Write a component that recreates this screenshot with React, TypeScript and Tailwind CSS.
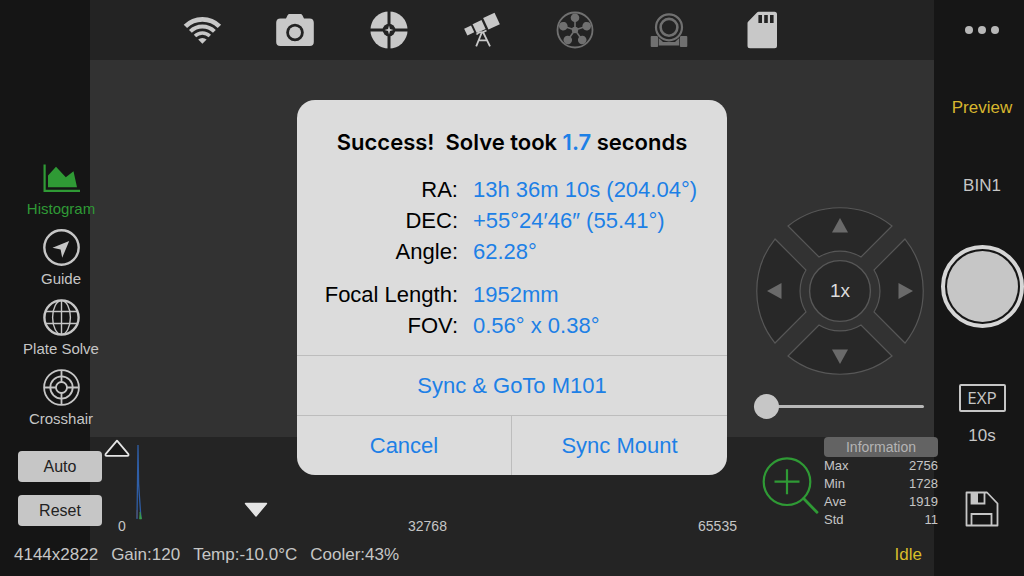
import React, { useState } from 'react';

interface SolveRow {
    label: string;
    value: string;
    spaced?: boolean;
}

interface ToolItem {
    label: string;
    icon: React.ElementType;
    active?: boolean;
}

const SOLVE_ROWS: SolveRow[] = [
    { label: 'RA:', value: '13h 36m 10s (204.04°)' },
    { label: 'DEC:', value: '+55°24′46″ (55.41°)' },
    { label: 'Angle:', value: '62.28°' },
    { label: 'Focal Length:', value: '1952mm', spaced: true },
    { label: 'FOV:', value: '0.56° x 0.38°' },
];

const STATS = [
    { name: 'Max', value: 2756 },
    { name: 'Min', value: 1728 },
    { name: 'Ave', value: 1919 },
    { name: 'Std', value: 11 },
];

const STATUS = ['4144x2822', 'Gain:120', 'Temp:-10.0°C', 'Cooler:43%'];

/* ---------- Top bar icons ---------- */

const WifiIcon = () => (
    <svg viewBox="0 0 40 40" className="h-10 w-10" fill="none" stroke="currentColor">
        <path d="M3.4 16.4A24 24 0 0 1 37.4 16.4" strokeWidth="4.8" />
        <path d="M8.4 21.4A17 17 0 0 1 32.4 21.4" strokeWidth="4" />
        <path d="M13 26A10.5 10.5 0 0 1 27.8 26" strokeWidth="3.4" />
        <path d="M20.4 33.8L16.2 29.6A6 6 0 0 1 24.6 29.6Z" fill="currentColor" stroke="none" />
    </svg>
);

const CameraIcon = () => (
    <svg viewBox="0 0 40 40" className="h-10 w-10" fill="currentColor">
        <path
            fillRule="evenodd"
            d="M5.5 8.5H11L12.6 5.2Q13.2 4 14.6 4H25.4Q26.8 4 27.4 5.2L29 8.5H34.5Q38.8 8.5 38.8 12.8V32Q38.8 36 34.8 36H5.2Q1.2 36 1.2 32V12.8Q1.2 8.5 5.5 8.5ZM20 13.7A8.8 8.8 0 1 0 20 31.3A8.8 8.8 0 1 0 20 13.7Z"
        />
        <circle cx="20" cy="22.5" r="6" />
    </svg>
);

const GuiderIcon = () => (
    <svg viewBox="0 0 40 40" className="h-10 w-10">
        <circle cx="20" cy="20" r="18.6" fill="currentColor" />
        <g stroke="#232323" strokeWidth="3">
            <path d="M20 0V40M0 20H40" />
        </g>
        <circle cx="20" cy="20" r="6.3" fill="#232323" />
        <path d="M20 15.5L21 19L24.5 20L21 21L20 24.5L19 21L15.5 20L19 19Z" fill="currentColor" />
    </svg>
);

const TelescopeIcon = () => (
    <svg viewBox="0 0 40 40" className="h-10 w-10" fill="currentColor">
        <rect x="3.4" y="16.7" width="7.6" height="7.6" transform="rotate(-25 7.2 20.5)" />
        <rect x="12.2" y="11.7" width="9.8" height="9.8" transform="rotate(-25 17.1 16.6)" />
        <rect x="23.2" y="4.8" width="12.6" height="12.6" transform="rotate(-25 29.5 11.1)" />
        <g fill="none" stroke="currentColor" strokeWidth="1.8">
            <path d="M14.5 24.5Q17 21.5 20.5 22.3L24.5 20.5" />
            <path d="M20 22L14.2 36.4M21 22L28 36.4M17 30.3H25" />
        </g>
    </svg>
);

const FilterWheelIcon = () => (
    <svg viewBox="0 0 40 40" className="h-10 w-10">
        <circle cx="20" cy="20" r="17.5" fill="none" stroke="currentColor" strokeWidth="1.8" />
        {[0, 72, 144, 216, 288].map((angle) => (
            <g key={angle} transform={`rotate(${angle} 20 20)`}>
                <path d="M20 20V8" stroke="currentColor" strokeWidth="1.6" />
                <circle cx="20" cy="7.7" r="4.3" fill="currentColor" />
            </g>
        ))}
        <circle cx="20" cy="20" r="3.2" fill="currentColor" />
    </svg>
);

const FocuserIcon = () => (
    <svg viewBox="0 0 40 40" className="h-10 w-10" fill="currentColor">
        <rect x="1.7" y="26" width="7.4" height="11" rx="1" />
        <rect x="30.9" y="26" width="7.4" height="11" rx="1" />
        <path d="M9.8 28Q12 30 14 32H26Q28 30 30.2 28V35.5H9.8Z" />
        <circle cx="20" cy="17.3" r="14.6" fill="#232323" />
        <g fill="none" stroke="currentColor" strokeWidth="2.2">
            <circle cx="20" cy="17.3" r="13" />
            <circle cx="20" cy="17.3" r="8.4" strokeWidth="2.6" />
        </g>
    </svg>
);

const SdCardIcon = () => (
    <svg viewBox="0 0 40 40" className="h-10 w-10">
        <path
            d="M16.5 1.8H32.5Q35 1.8 35 4.3V35.8Q35 38.3 32.5 38.3H8Q5.5 38.3 5.5 35.8V13.3Q5.5 12.3 6.3 11.5L15 2.5Q15.7 1.8 16.5 1.8Z"
            fill="currentColor"
        />
        <path d="M18.2 5V13M24 5V13M29.8 5V13" stroke="#232323" strokeWidth="3.6" />
    </svg>
);

/* ---------- Left tool icons ---------- */

const HistogramIcon = () => (
    <svg viewBox="0 0 37 37" className="h-[37px] w-[37px]" fill="currentColor">
        <path d="M.5 5.5H2.7V30.8H37V33H.5Z" />
        <path d="M5 16.5L13 7.7L22.8 18.3L30.5 12.3L34 28.3H5Z" />
    </svg>
);

const GuideIcon = () => (
    <svg viewBox="0 0 37 37" className="h-[37px] w-[37px]">
        <circle cx="18.5" cy="18.5" r="17.2" fill="none" stroke="currentColor" strokeWidth="2.4" />
        <path d="M26.2 12L19.2 28.7L17.6 20.4L9.5 18.7Z" fill="currentColor" />
    </svg>
);

const GlobeIcon = () => (
    <svg viewBox="0 0 37 37" className="h-[37px] w-[37px]" fill="none" stroke="currentColor" strokeWidth="1.4">
        <circle cx="18.5" cy="18.5" r="17.1" strokeWidth="2.4" />
        <ellipse cx="18.5" cy="18.5" rx="8.9" ry="17" />
        <path d="M18.5 1.5V35.5M2.5 12.5H34.5M2.5 24.5H34.5" />
    </svg>
);

const CrosshairIcon = () => (
    <svg viewBox="0 0 37 37" className="h-[37px] w-[37px]" fill="none" stroke="currentColor" strokeWidth="1.8">
        <circle cx="18.5" cy="18.5" r="17.4" />
        <circle cx="18.5" cy="18.5" r="11.2" />
        <circle cx="18.5" cy="18.5" r="5.5" />
        <path d="M18.5 1V13M18.5 24V36M1 18.5H13M24 18.5H36" />
    </svg>
);

const DEVICES = [
    { label: 'Connection', icon: WifiIcon, enabled: true },
    { label: 'Main camera', icon: CameraIcon, enabled: true },
    { label: 'Guide camera', icon: GuiderIcon, enabled: true },
    { label: 'Mount', icon: TelescopeIcon, enabled: true },
    { label: 'Filter wheel', icon: FilterWheelIcon, enabled: false },
    { label: 'Focuser', icon: FocuserIcon, enabled: false },
    { label: 'Storage', icon: SdCardIcon, enabled: true },
];

const TOOLS: ToolItem[] = [
    { label: 'Histogram', icon: HistogramIcon, active: true },
    { label: 'Guide', icon: GuideIcon },
    { label: 'Plate Solve', icon: GlobeIcon },
    { label: 'Crosshair', icon: CrosshairIcon },
];

const DirectionPad: React.FC = () => (
    <div className="relative h-[168px] w-[168px]">
        <svg viewBox="-84 -84 168 168" className="absolute inset-0 h-full w-full">
            {[0, 90, 180, 270].map((angle) => (
                <g key={angle} transform={`rotate(${angle})`}>
                    <path
                        d="M-52 -65A83.2 83.2 0 0 1 52 -65L21 -34A40 40 0 0 0 -21 -34Z"
                        fill="#282828"
                        stroke="#575757"
                        strokeWidth="1.2"
                    />
                    <path d="M0 -73L8 -58.5H-8Z" fill="#6a6a6a" />
                </g>
            ))}
            <circle r="30.4" fill="#282828" stroke="#575757" strokeWidth="1.4" />
        </svg>
        <div className="relative grid h-full grid-cols-3 grid-rows-3 text-[19px] text-[#dcdcdc]">
            <button className="col-start-2" aria-label="Slew north" />
            <button className="col-start-1 row-start-2" aria-label="Slew west" />
            <button className="col-start-2 row-start-2">1x</button>
            <button className="col-start-3 row-start-2" aria-label="Slew east" />
            <button className="col-start-2 row-start-3" aria-label="Slew south" />
        </div>
    </div>
);

const SolveDialog: React.FC = () => (
    <div className="absolute inset-0 z-30 flex items-center justify-center pb-0.5">
        <div
            role="dialog"
            aria-labelledby="solve-title"
            className="w-[430px] overflow-hidden rounded-[18px] bg-[#dcdcdc] text-[22px] text-black"
        >
            <h1
                id="solve-title"
                className="pt-7 text-center font-['Inter',sans-serif] text-[22px] leading-7 font-semibold whitespace-pre"
            >
                Success!{'  '}Solve took <span className="text-[#1d80e6]">1.7</span> seconds
            </h1>
            <dl className="mt-[18px] pb-3.5">
                {SOLVE_ROWS.map((row) => (
                    <div
                        key={row.label}
                        className={`grid grid-cols-[161px_1fr] gap-x-[15px] leading-[31px] ${row.spaced ? 'mt-3' : ''}`}
                    >
                        <dt className="text-right">{row.label}</dt>
                        <dd className="whitespace-nowrap text-[#1d80e6]">{row.value}</dd>
                    </div>
                ))}
            </dl>
            <div className="grid grid-cols-2 text-[#1d80e6]">
                <button className="col-span-2 h-[60px] border-t border-[#bdbdbd]">Sync &amp; GoTo M101</button>
                <button className="h-[60px] border-t border-r border-[#bdbdbd]">Cancel</button>
                <button className="h-[60px] border-t border-[#bdbdbd]">Sync Mount</button>
            </div>
        </div>
    </div>
);

export default function App() {
    const [speed, setSpeed] = useState(0);

    return (
        <div className="relative grid min-h-screen grid-cols-[90px_1fr_90px] grid-rows-[60px_1fr_97px_42px] bg-[#323232] font-['Liberation_Sans',Arial,sans-serif] text-[#c6c6c6]">
            {/* Side and bottom panels */}
            <div className="col-start-1 row-span-4 row-start-1 bg-[#151515]" />
            <div className="col-start-2 row-span-2 row-start-3 bg-[#242424]" />

            {/* Devices */}
            <header className="col-start-2 row-start-1 flex items-center justify-between bg-[#232323] pr-[152px] pl-[92px]">
                {DEVICES.map(({ label, icon: Icon, enabled }) => (
                    <button key={label} aria-label={label} className={enabled ? 'text-[#c8c8c8]' : 'text-[#707070]'}>
                        <Icon />
                    </button>
                ))}
            </header>

            {/* Tools */}
            <nav className="z-10 col-start-1 row-span-2 row-start-1 ml-[22px] flex w-[78px] flex-col justify-end gap-2.5 pb-2">
                {TOOLS.map(({ label, icon: Icon, active }) => (
                    <button
                        key={label}
                        className={`flex flex-col items-center gap-[3px] text-[15px] leading-5 whitespace-nowrap ${
                            active ? 'text-[#2f9a35]' : 'text-[#c6c6c6]'
                        }`}
                    >
                        <Icon />
                        {label}
                    </button>
                ))}
            </nav>

            {/* Stretch buttons */}
            <div className="z-10 col-start-1 row-start-3 ml-[18px] flex w-[84px] flex-col gap-[13px] pt-3.5 text-base text-[#222222]">
                <button className="h-[31px] rounded bg-[#c6c6c6]">Auto</button>
                <button className="h-[31px] rounded bg-[#c6c6c6]">Reset</button>
            </div>

            {/* Mount control */}
            <main className="col-start-2 row-start-2 flex flex-col items-end justify-end gap-[18px] pr-2.5 pb-[18px]">
                <DirectionPad />
                <input
                    type="range"
                    aria-label="Slew speed"
                    min={0}
                    max={100}
                    value={speed}
                    onChange={(e) => setSpeed(Number(e.target.value))}
                    className="h-[26px] w-[170px] appearance-none bg-transparent [&::-webkit-slider-runnable-track]:h-[3px] [&::-webkit-slider-runnable-track]:rounded-full [&::-webkit-slider-runnable-track]:bg-[#b8b8b8] [&::-webkit-slider-thumb]:-mt-[11px] [&::-webkit-slider-thumb]:h-[25px] [&::-webkit-slider-thumb]:w-[25px] [&::-webkit-slider-thumb]:appearance-none [&::-webkit-slider-thumb]:rounded-full [&::-webkit-slider-thumb]:bg-[#c6c6c6]"
                />
            </main>

            {/* Histogram and statistics */}
            <section className="z-10 col-start-2 row-start-3 flex items-start">
                <div className="relative ml-7 flex h-full flex-1 flex-col justify-end">
                    <svg viewBox="0 0 10 76" className="absolute top-[7px] left-4 h-[76px] w-2.5" fill="none">
                        <path d="M3 75L4 1L4.6 40L7 75" stroke="#2f5ea6" strokeWidth="1.3" />
                        <path d="M5.5 75L6 68L7.6 75Z" fill="#3a9a4a" stroke="#3a9a4a" strokeWidth=".6" />
                        <path d="M3 74V66" stroke="#6a5560" strokeWidth=".7" />
                    </svg>
                    <button aria-label="Midtones" className="absolute top-0.5 -left-3.5">
                        <svg viewBox="0 0 26 18" className="h-[18px] w-[26px]">
                            <path
                                d="M13 1.6L24.4 15.2Q24.9 16.8 23.4 16.8H2.6Q1.1 16.8 1.6 15.2Z"
                                fill="#181818"
                                stroke="#e4e4e4"
                                strokeWidth="1.8"
                                strokeLinejoin="round"
                            />
                        </svg>
                    </button>
                    <button aria-label="White point" className="absolute top-[65px] left-[126px]">
                        <svg viewBox="0 0 24 16" className="h-4 w-6">
                            <path
                                d="M1.5 1.5H22.5L12 14Z"
                                fill="#e4e4e4"
                                stroke="#e4e4e4"
                                strokeWidth="1.4"
                                strokeLinejoin="round"
                            />
                        </svg>
                    </button>
                    <div className="grid grid-cols-3 text-sm leading-4">
                        <span>0</span>
                        <span className="text-center">32768</span>
                        <span className="text-right">65535</span>
                    </div>
                </div>
                <button aria-label="Zoom in" className="mt-5 ml-6 text-[#2f9a35]">
                    <svg viewBox="0 0 60 60" className="h-[60px] w-[60px]" fill="none" stroke="currentColor" strokeWidth="2.2">
                        <circle cx="26" cy="24.7" r="23.3" />
                        <path d="M26 12.2V37.2M13.5 24.7H38.5" />
                        <path d="M42.6 41.5L56 55.3" strokeWidth="2.8" strokeLinecap="round" />
                    </svg>
                </button>
                <div className="-mr-1 ml-[3px] w-[114px] shrink-0">
                    <button className="block h-5 w-full rounded bg-[#636363] text-sm leading-5 text-[#b4b4b4]">
                        Information
                    </button>
                    <table className="w-full text-[13px] leading-[18px]">
                        <tbody>
                            {STATS.map((stat) => (
                                <tr key={stat.name}>
                                    <th scope="row" className="p-0 text-left font-normal">
                                        {stat.name}
                                    </th>
                                    <td className="p-0 text-right">{stat.value}</td>
                                </tr>
                            ))}
                        </tbody>
                    </table>
                </div>
            </section>

            {/* Status line */}
            <footer className="z-10 col-span-2 col-start-1 row-start-4 flex items-center gap-[13px] pr-3 pl-3.5 text-[17px] whitespace-nowrap">
                {STATUS.map((text) => (
                    <span key={text}>{text}</span>
                ))}
                <span className="ml-auto text-[#d8be2a]">Idle</span>
            </footer>

            {/* Capture controls */}
            <aside className="col-start-3 row-span-4 row-start-1 flex flex-col items-center bg-[#161616] pt-5 pl-1.5 text-[17px] leading-6">
                <button aria-label="More" className="flex h-5 items-center gap-[5px]">
                    <span className="h-2 w-2 rounded-full bg-[#b8b8b8]" />
                    <span className="h-2 w-2 rounded-full bg-[#b8b8b8]" />
                    <span className="h-2 w-2 rounded-full bg-[#b8b8b8]" />
                </button>
                <button className="mt-14 text-[#d8b62e]">Preview</button>
                <button className="mt-[54px]">BIN1</button>
                <button
                    aria-label="Shutter"
                    className="mt-[47px] h-[83px] w-[83px] shrink-0 rounded-full border-4 border-[#d6d6d6] p-0.5"
                >
                    <span className="block h-full w-full rounded-full bg-[#c6c6c6]" />
                </button>
                <button className="mt-14 flex h-7 w-[47px] items-center justify-center rounded-xs border-2 border-[#c6c6c6] font-['Open_Sans',sans-serif] text-[17px]">
                    EXP
                </button>
                <span className="mt-3">10s</span>
                <button aria-label="Save" className="mt-[43px]">
                    <svg viewBox="0 0 34 36" className="h-9 w-[34px]" fill="none" stroke="currentColor" strokeWidth="1.8">
                        <path d="M1.5 1.5H22L32.5 12.5V34.5H1.5Z" strokeLinejoin="round" />
                        <path d="M6.5 1.5V12.5H19.5V1.5M6.5 34.5V23H26.5V34.5" />
                        <path d="M6.5 1.5H13V12.5H6.5Z" fill="currentColor" stroke="none" />
                    </svg>
                </button>
            </aside>

            <SolveDialog />
        </div>
    );
}
